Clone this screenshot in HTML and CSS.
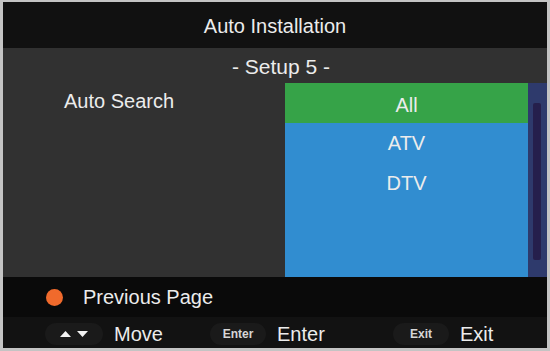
FILE: index.html
```html
<!DOCTYPE html>
<html lang="en">
<head>
    <meta charset="UTF-8">
    <title>Auto Installation</title>
    <link rel="stylesheet" href="styles.css">
</head>
<body>

<div class="screen">
    <header class="title">Auto Installation</header>

    <div class="main">
        <div class="subtitle">- Setup 5 -</div>
        <div class="content">
            <div class="label">Auto Search</div>
            <ul class="list">
                <li class="active">All</li>
                <li>ATV</li>
                <li>DTV</li>
            </ul>
            <div class="scroll"><div class="track"></div></div>
        </div>
    </div>

    <div class="hint">
        <span class="dot"></span>
        Previous Page
    </div>

    <!-- remote key legend -->
    <div class="keys">
        <div class="key">
            <span class="pill">
                <svg width="28" height="8" viewBox="0 0 28 8">
                    <polygon points="0,7 5.5,1 11,7" fill="#f2f2f2"/>
                    <polygon points="17,1 28,1 22.5,7" fill="#f2f2f2"/>
                </svg>
            </span>
            Move
        </div>
        <div class="key">
            <span class="pill">Enter</span>
            Enter
        </div>
        <div class="key">
            <span class="pill">Exit</span>
            Exit
        </div>
    </div>
</div>

</body>
</html>
```

FILE: styles.css
```css
* { margin: 0; padding: 0; box-sizing: border-box; }
body { background: #c4c4c4; padding: 2px 3px 3px 3px; font-family: "Liberation Sans", Arial, sans-serif; color: #ececec; }
.screen { width: 544px; height: 346px; display: flex; flex-direction: column; }

.title { height: 46px; background: #111111; font-size: 20px; display: flex; align-items: center; justify-content: center; padding-top: 3px; }

.main { background: #313131; }
.subtitle { height: 35px; font-size: 21px; display: flex; align-items: center; justify-content: center; padding: 2px 0 0 12px; }
.content { display: flex; height: 194px; }
.label { flex: 1; font-size: 20px; line-height: 20px; padding: 8px 0 0 61px; }
.list { width: 243px; background: #318dd0; list-style: none; }
.list li { height: 40px; line-height: 40px; font-size: 20px; text-align: center; }
.list li.active { background: #36a348; padding-top: 2px; }
.scroll { width: 19px; background: #2e3a6c; padding: 20px 6px 0 5px; }
.track { height: 157px; background: #251f4c; border-radius: 2px; }

.hint { height: 40px; background: #0a0a0a; font-size: 20px; display: flex; align-items: center; padding-left: 43px; }
.dot { width: 17px; height: 17px; border-radius: 50%; background: #f06a2c; margin-right: 20px; }

.keys { height: 31px; background: #121212; display: grid; grid-template-columns: 165px 183px auto; align-items: center; padding: 3px 0 0 42px; font-size: 20px; }
.key { display: flex; align-items: center; gap: 11px; }
.pill { height: 22px; width: 56px; border-radius: 11px; background: #1a1a1a; display: flex; align-items: center; justify-content: center; font-size: 12px; font-weight: bold; color: #d6d6d6; }
.key:first-child .pill { width: 58px; }
```
